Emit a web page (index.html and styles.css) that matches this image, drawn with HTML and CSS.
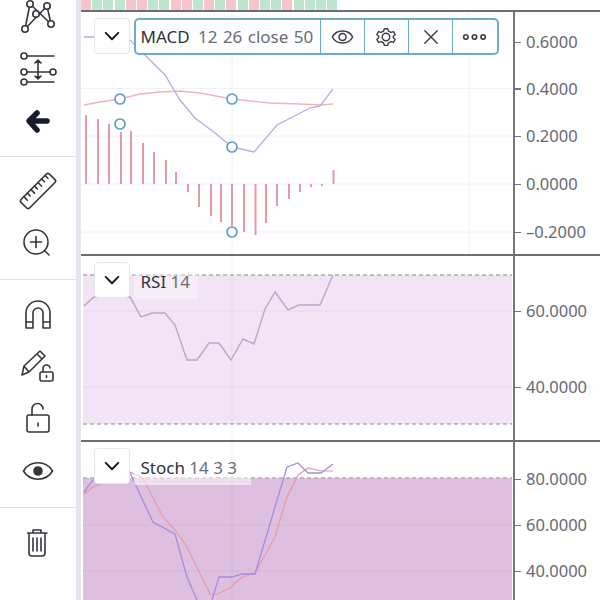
FILE: index.html
```html
<!DOCTYPE html>
<html lang="en">
<head>
<meta charset="utf-8">
<title>Chart</title>
<link rel="stylesheet" href="styles.css">
</head>
<body>
<div class="app">
  <aside class="sidebar">
    <div class="group group-a">
      <div class="tool"><svg viewBox="16 -5 44 44" class="ico"><path d="M30 4 25 29M30 4 51 24M47 6 25 29M47 6 51 24"/><circle cx="30" cy="4" r="3.2" class="wf"/><circle cx="47" cy="6" r="3.2" class="wf"/><circle cx="36" cy="14" r="3.2" class="wf"/><circle cx="25" cy="29" r="3.2" class="wf"/><circle cx="51" cy="24" r="3.2" class="wf"/></svg></div>
      <div class="tool"><svg viewBox="16 47 44 44" class="ico"><path d="M27 56H54M27 72H50M27 82H54M38 61V78"/><path d="M35 63 38 60 41 63M35 76 38 79 41 76" class="fill"/><circle cx="24" cy="56" r="3" class="wf"/><circle cx="24" cy="72" r="3" class="wf"/><circle cx="53" cy="72" r="3" class="wf"/><circle cx="24" cy="82" r="3" class="wf"/></svg></div>
      <div class="tool"><svg viewBox="16 99 44 44" class="ico"><path d="M47 121H31M37 113 29 121 37 130" class="bold"/></svg></div>
    </div>
    <div class="group group-b">
      <div class="tool short"><svg viewBox="16 170 44 44" class="ico"><g transform="rotate(-45 38 191)"><rect x="18" y="185" width="40" height="12" rx="2"/><path d="M24 185v5M29 185v4M34 185v5M39 185v4M44 185v5M49 185v4M54 185v4"/></g></svg></div>
      <div class="tool short"><svg viewBox="16 220 44 44" class="ico"><circle cx="36" cy="242" r="12"/><path d="M45 251 49 255M30.500 242H41.500M36 236.500V247.500"/></svg></div>
    </div>
    <div class="group group-c">
      <div class="tool"><svg viewBox="16 293 44 44" class="ico"><path d="M26 328V313a12 12 0 0 1 24 0V328H43V313a5 5 0 0 0-10 0V328ZM26 322H33M43 322H50"/></svg></div>
      <div class="tool"><svg viewBox="16 345 44 44" class="ico"><path d="M22 375 24 366 40 351 45 356 29 372ZM37 354 42 359M24 366 29 372"/><rect x="40" y="372" width="13" height="9" rx="1.500"/><path d="M43 372V369a3.500 3.500 0 0 1 7-1M46.500 375.500V377.500"/></svg></div>
      <div class="tool"><svg viewBox="16 398 44 44" class="ico"><rect x="27" y="416" width="22" height="17" rx="2"/><path d="M32 416V410a5.500 5.500 0 0 1 11 0M38 424V427"/></svg></div>
      <div class="tool"><svg viewBox="16 449 44 44" class="ico"><path d="M23.500 471C30 460 46 460 52.500 471 46 482 30 482 23.500 471Z"/><circle cx="38" cy="471" r="4" class="fill"/></svg></div>
    </div>
    <div class="group group-d">
      <div class="tool"><svg viewBox="16 521 44 44" class="ico"><path d="M27.500 533H47M33 533V530H41V533M29 533V553a3 3 0 0 0 3 3H42a3 3 0 0 0 3-3V533M33 538V551M37 538V551M41 538V551"/></svg></div>
    </div>
  </aside>

  <main class="main">
    <div class="strip">
      <i class="p"></i><i class="g"></i><i class="g"></i><i class="g"></i><i class="p"></i><i class="p"></i><i class="g"></i><i class="g"></i><i class="p"></i><i class="p"></i><i class="g"></i><i class="p"></i><i class="g"></i><i class="p"></i><i class="g"></i><i class="p"></i><i class="g"></i><i class="g"></i><i class="p"></i><i class="g"></i><i class="g"></i><i class="g"></i><i class="g"></i>
    </div>

    <section class="pane pane-macd">
      <div class="plot">
        <svg class="chart" viewBox="81 12 431 242">
          <path class="grid" d="M81 88.500H512M81 136H512M81 184H512M81 232H512M232 12V254M469 12V254"/>
          <path class="hist" d="M86 184V115M98 184V119M109 184V124M121 184V132M131 184V131M143 184V143M154 184V152M166 184V160M176 184V172M188 184V192M199 184V207M211 184V216M221 184V222M232 184V226M244 184V232M255.500 184V235M266 184V223M277 184V206M289 184V199M300 184V192M311 184V187M322 184V186M333.500 184V170"/>
          <path class="line-pink" d="M84 105 100 102 120 99 140 94 160 92 180 91 200 93 232 99 270 103 300 104 320 105 333 104"/>
          <path class="line-purple" d="M84 37 100 37 130 40 145 55 165 75 180 100 195 118 215 133 232 147 254 152 277 125 310 108 320 106 333 89"/>
          <circle class="mark" cx="120" cy="99" r="5"/><circle class="mark" cx="120" cy="124" r="5"/><circle class="mark" cx="232" cy="99" r="5"/><circle class="mark" cx="232" cy="147" r="5"/><circle class="mark" cx="232" cy="232" r="5"/>
        </svg>
        <div class="legend legend-macd">
          <button class="chev"><svg viewBox="0 0 20 12" class="chev-ico"><path d="M3 2 10 9 17 2"/></svg></button>
          <div class="toolbar">
            <div class="title"><b>MACD</b><span class="params"> 12 26 close 50</span></div>
            <div class="seg"><svg viewBox="0 0 26 20" class="seg-ico wide"><path d="M1.500 10C6 1 20 1 24.500 10 20 19 6 19 1.500 10Z"/><circle cx="13" cy="10" r="4"/></svg></div>
            <div class="seg"><svg viewBox="0 0 24 24" class="seg-ico"><path d="M10 2H14L15 5 18 6.500 21 5.500 23 9 20.800 11V13L23 15 21 18.500 18 17.500 15 19 14 22H10L9 19 6 17.500 3 18.500 1 15 3.200 13V11L1 9 3 5.500 6 6.500 9 5Z"/><circle cx="12" cy="12" r="4.500"/></svg></div>
            <div class="seg"><svg viewBox="0 0 18 18" class="seg-ico small"><path d="M2 2 16 16M16 2 2 16"/></svg></div>
            <div class="seg"><svg viewBox="0 0 26 8" class="seg-ico dots"><circle cx="4" cy="4" r="2.300"/><circle cx="13" cy="4" r="2.300"/><circle cx="22" cy="4" r="2.300"/></svg></div>
          </div>
        </div>
      </div>
      <div class="axis">
        <span class="tick" style="top:18px">0.6000</span>
        <span class="tick" style="top:64.500px">0.4000</span>
        <span class="tick" style="top:112px">0.2000</span>
        <span class="tick" style="top:160px">0.0000</span>
        <span class="tick" style="top:208px">–0.2000</span>
      </div>
    </section>

    <section class="pane pane-rsi">
      <div class="plot">
        <svg class="chart" viewBox="81 256 431 184">
          <rect class="band-rsi" x="83" y="275" width="429" height="149"/>
          <path class="grid-dim" d="M83 311H512M83 387H512M232 256V440"/>
          <path class="dash" d="M83 275H512M83 424H512"/>
          <path class="line-rsi" d="M84 306 94 297 130 297 141 317 152 313 165 313 175 325 187 360 197 360 209 343 219 343 231 360 243 339 254 344 265 309 275 292 288 310 299 305 320 305 333 275"/>
        </svg>
        <div class="legend">
          <button class="chev"><svg viewBox="0 0 20 12" class="chev-ico"><path d="M3 2 10 9 17 2"/></svg></button>
          <div class="plain plain-rsi"><b>RSI</b> 14</div>
        </div>
      </div>
      <div class="axis">
        <span class="tick" style="top:43px">60.0000</span>
        <span class="tick" style="top:119px">40.0000</span>
      </div>
    </section>

    <section class="pane pane-stoch">
      <div class="plot">
        <svg class="chart" viewBox="81 442 431 158">
          <rect class="band-stoch" x="83" y="478" width="429" height="122"/>
          <path class="grid-dim" d="M83 525H512M83 571H512M232 442V600"/>
          <path class="dash" d="M83 478H512"/>
          <path class="line-stoch-p" d="M84 494 93 487 130 472 143 478 163 517 175 530 187 547 210 594 218 594 230 588 242 577 255 573 275 537 287 497 298 475 308 468 321 471 333 471"/>
          <path class="line-stoch-b" d="M84 492 93 480 130 473 153 522 175 534 187 577 197 600M212 600 219 577 232 577 242 574 255 574 287 467 298 463 308 473 321 473 333 464"/>
        </svg>
        <div class="legend">
          <button class="chev"><svg viewBox="0 0 20 12" class="chev-ico"><path d="M3 2 10 9 17 2"/></svg></button>
          <div class="plain plain-stoch"><b>Stoch</b> 14 3 3</div>
        </div>
      </div>
      <div class="axis">
        <span class="tick" style="top:25px">80.0000</span>
        <span class="tick" style="top:71px">60.0000</span>
        <span class="tick" style="top:117px">40.0000</span>
      </div>
    </section>
  </main>
</div>
</body>
</html>
```
FILE: styles.css
```css
* { box-sizing: border-box; }
html, body { margin: 0; height: 100%; background: #fff; overflow: hidden; }
body { font-family: "Noto Sans", "Open Sans", sans-serif; color: #2f323a; }

.app { display: flex; width: 600px; height: 600px; }

/* left toolbar */
.sidebar { width: 81px; flex: none; border-right: 5px solid #e6e6ef; display: flex; flex-direction: column; overflow: hidden; }
.group { border-bottom: 1px solid #e2e2e4; flex: none; }
.group-a { margin-top: -9px; height: 166px; }
.group-b { height: 123px; padding-top: 10px; }
.group-c { height: 228px; padding-top: 9px; }
.group-d { border-bottom: 0; padding-top: 9px; }
.tool { height: 52px; display: flex; align-items: center; justify-content: center; }
.tool.short { height: 50px; }
.ico { width: 44px; height: 44px; overflow: visible; fill: none; stroke: #33363d; stroke-width: 1.6; stroke-linejoin: round; stroke-linecap: round; }
.ico .wf { fill: #fff; }
.ico .fill { fill: #33363d; stroke: #33363d; }
.ico .bold { stroke: #161a2b; stroke-width: 5.5; }

/* main column */
.main { flex: 1; min-width: 0; display: flex; flex-direction: column; }
.strip { height: 12px; flex: none; display: flex; gap: 1.200px; border-bottom: 2px solid #6e6e72; }
.strip i { display: block; width: 10px; height: 10px; }
.strip .p { background: #f6c4cd; }
.strip .g { background: #bfe5cf; }

.pane { display: flex; flex: none; }
.pane-macd { height: 244px; border-bottom: 2px solid #6e6e72; }
.pane-rsi { height: 186px; border-bottom: 2px solid #6e6e72; }
.pane-stoch { height: 158px; }

.plot { position: relative; width: 432px; flex: none; overflow: hidden; }
.chart { display: block; width: 431px; height: 100%; fill: none; }

.grid { stroke: #f2f2f5; stroke-width: 1; }
.grid-dim { stroke: #000; stroke-opacity: .05; stroke-width: 1; }
.hist { stroke: #e79aa3; stroke-width: 2; }
.line-pink { stroke: #efb6b6; stroke-width: 1.300; }
.line-purple { stroke: #b9aade; stroke-width: 1.300; }
.mark { fill: #fff; stroke: #5b9fd0; stroke-width: 1.700; }
.band-rsi { fill: #f1e4f4; }
.band-stoch { fill: #dfbfdf; }
.dash { stroke: #b4aab4; stroke-width: 1.300; stroke-dasharray: 4 3; }
.line-rsi { stroke: #c2a2cb; stroke-width: 1.400; }
.line-stoch-p { stroke: #e39aa8; stroke-width: 1.200; }
.line-stoch-b { stroke: #a18fdc; stroke-width: 1.300; }

/* overlaid legends */
.legend { position: absolute; left: 12.500px; top: 6px; display: flex; gap: 4px; align-items: flex-start; }
.chev { width: 36px; height: 36px; padding: 0; background: #fff; border: 1px solid #e6e6e8; border-radius: 4px; display: flex; align-items: center; justify-content: center; }
.chev-ico { width: 18px; height: 11px; fill: none; stroke: #1a1c24; stroke-width: 2.200; stroke-linecap: round; stroke-linejoin: round; }

.toolbar { width: 365px; height: 37px; display: flex; background: #fff; border: 2px solid #6caad4; border-radius: 5px; }
.title { width: 184px; flex: none; display: flex; align-items: center; gap: 3px; padding-left: 5px; font-size: 17px; white-space: pre; }
.params { color: #6a6d76; word-spacing: 1px; }
.title b, .plain b { font-weight: 400; color: #2f323a; }
.seg { flex: 1; border-left: 1.500px solid #6caad4; display: flex; align-items: center; justify-content: center; }
.seg-ico { width: 20px; height: 20px; fill: none; stroke: #3a3d44; stroke-width: 1.700; stroke-linejoin: round; overflow: visible; }
.seg-ico.wide { width: 23px; height: 18px; }
.seg-ico.small { width: 16px; height: 16px; stroke-linecap: round; stroke-width: 1.600; }
.seg-ico.dots { width: 25px; height: 8px; }

.plain { height: 29px; margin-top: 8px; padding: 0 7px; font-size: 17px; line-height: 24px; color: #6a6d76; background: rgba(255,255,255,.35); white-space: pre; }
.plain-rsi { width: 64px; }
.plain-stoch { width: 117px; background: rgba(255,255,255,.5); }

/* price axis */
.axis { position: relative; flex: 1; border-left: 2px solid #77777b; }
.tick { position: absolute; left: -2px; padding-left: 13px; font-size: 16.500px; line-height: 24px; color: #666970; white-space: pre; }
.tick::before { content: ""; position: absolute; left: 2px; top: 11.500px; width: 6px; height: 1.500px; background: #77777b; }
```
